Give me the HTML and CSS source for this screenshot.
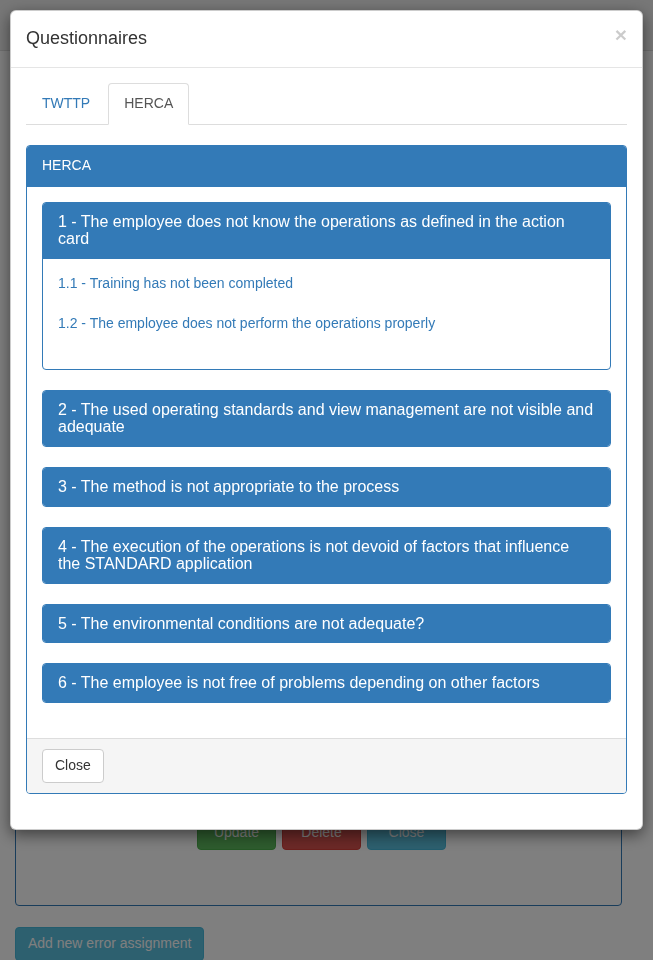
FILE: index.html
```html
<!DOCTYPE html>
<html>
<head>
<meta charset="utf-8">
<link rel="stylesheet" href="styles.css">
</head>
<body>
<div class="page">
  <div class="navbar"></div>
  <div class="container">
    <div class="bg-panel">
      <div class="bg-actions">
        <span class="btn btn-success">Update</span>
        <span class="btn btn-danger">Delete</span>
        <span class="btn btn-info">Close</span>
      </div>
    </div>
    <span class="btn btn-info add-btn">Add new error assignment</span>
  </div>
</div>

<div class="backdrop"></div>

<div class="modal">
  <div class="modal-content">
    <div class="modal-header">
      <span class="close">&times;</span>
      <h4 class="modal-title">Questionnaires</h4>
    </div>
    <div class="modal-body">
      <ul class="nav-tabs">
        <li><a>TWTTP</a></li>
        <li class="active"><a>HERCA</a></li>
      </ul>
      <div class="panel panel-primary outer">
        <div class="panel-heading">HERCA</div>
        <div class="panel-body">
          <div class="panel panel-primary inner">
            <div class="panel-heading"><h4 class="panel-title">1 - The employee does not know the operations as defined in the action card</h4></div>
            <div class="panel-body">
              <div class="item"><a>1.1 - Training has not been completed</a></div>
              <div class="item"><a>1.2 - The employee does not perform the operations properly</a></div>
            </div>
          </div>
          <div class="panel panel-primary inner collapsed">
            <div class="panel-heading"><h4 class="panel-title">2 - The used operating standards and view management are not visible and adequate</h4></div>
          </div>
          <div class="panel panel-primary inner collapsed">
            <div class="panel-heading"><h4 class="panel-title">3 - The method is not appropriate to the process</h4></div>
          </div>
          <div class="panel panel-primary inner collapsed">
            <div class="panel-heading"><h4 class="panel-title">4 - The execution of the operations is not devoid of factors that influence the STANDARD application</h4></div>
          </div>
          <div class="panel panel-primary inner collapsed">
            <div class="panel-heading"><h4 class="panel-title">5 - The environmental conditions are not adequate?</h4></div>
          </div>
          <div class="panel panel-primary inner collapsed">
            <div class="panel-heading"><h4 class="panel-title">6 - The employee is not free of problems depending on other factors</h4></div>
          </div>
        </div>
        <div class="panel-footer">
          <span class="btn btn-default">Close</span>
        </div>
      </div>
    </div>
  </div>
</div>
</body>
</html>
```

FILE: styles.css
```css
* { box-sizing: border-box; }
html, body { margin: 0; padding: 0; }
body {
  font-family: "Liberation Sans", Arial, Helvetica, sans-serif;
  font-size: 14px;
  line-height: 1.42857;
  color: #333;
  background: #fff;
  overflow: hidden;
  height: 960px;
}
.page { height: 960px; }
.navbar {
  height: 51px;
  background: #eeeeee;
  border-bottom: 1px solid #dddddd;
}
.container {
  padding: 0 31px 0 15px;
}
.bg-panel {
  margin-top: 540px;
  height: 315px;
  border: 1px solid #337ab7;
  border-radius: 4px;
  display: flex;
  flex-direction: column;
  justify-content: flex-end;
  padding-bottom: 55px;
}
.bg-actions {
  display: flex;
  justify-content: center;
  gap: 6px;
  padding-left: 6px;
}
.btn {
  display: inline-block;
  padding: 6px 12px;
  font-size: 14px;
  line-height: 1.42857;
  border: 1px solid transparent;
  border-radius: 4px;
  white-space: nowrap;
  color: #fff;
}
.bg-actions .btn { width: 79px; text-align: center; }
.btn-success { background: #5cb85c; border-color: #4cae4c; }
.btn-danger { background: #d9534f; border-color: #d43f3a; }
.btn-info { background: #5bc0de; border-color: #46b8da; }
.add-btn { margin-top: 21px; }
.btn-default { background: #fff; border-color: #ccc; color: #333; }

.backdrop {
  position: fixed;
  inset: 0;
  background: rgba(0, 0, 0, 0.5);
}
.modal {
  position: fixed;
  top: 10px;
  left: 10px;
  right: 10px;
}
.modal-content {
  background: #fff;
  border: 1px solid rgba(0, 0, 0, 0.2);
  border-radius: 6px;
  box-shadow: 0 5px 15px rgba(0, 0, 0, 0.5);
}
.modal-header {
  padding: 15px;
  border-bottom: 1px solid #e5e5e5;
}
.modal-title {
  margin: 0;
  font-size: 18px;
  font-weight: 500;
  line-height: 1.42857;
}
.close {
  float: right;
  font-size: 21px;
  font-weight: bold;
  line-height: 1;
  color: #000;
  opacity: 0.2;
  margin-top: -2px;
}
.modal-body { padding: 15px; }
.nav-tabs {
  list-style: none;
  margin: 0;
  padding: 0;
  display: flex;
  border-bottom: 1px solid #ddd;
}
.nav-tabs li { margin-right: 2px; margin-bottom: -1px; }
.nav-tabs a {
  display: block;
  padding: 10px 15px;
  line-height: 1.42857;
  border: 1px solid transparent;
  border-radius: 4px 4px 0 0;
  color: #337ab7;
}
.nav-tabs .active a {
  color: #555;
  background: #fff;
  border-color: #ddd #ddd transparent;
}
.panel {
  background: #fff;
  border: 1px solid transparent;
  border-radius: 4px;
  margin-bottom: 20px;
}
.panel-primary { border-color: #337ab7; }
.panel-primary > .panel-heading {
  background: #337ab7;
  color: #fff;
  border-bottom: 1px solid #337ab7;
}
.panel-heading {
  padding: 10px 15px;
  border-top-left-radius: 3px;
  border-top-right-radius: 3px;
}
.collapsed > .panel-heading { border-radius: 3px; border-bottom: 0; }
.panel-title {
  margin: 0;
  font-size: 16px;
  font-weight: 500;
  line-height: 1.1;
}
.panel-body { padding: 15px; }
.outer { margin-top: 20px; }
.item { margin-bottom: 20px; }
.item a { color: #337ab7; }
.panel-footer {
  padding: 10px 15px;
  background: #f5f5f5;
  border-top: 1px solid #ddd;
  border-bottom-left-radius: 3px;
  border-bottom-right-radius: 3px;
}
```
